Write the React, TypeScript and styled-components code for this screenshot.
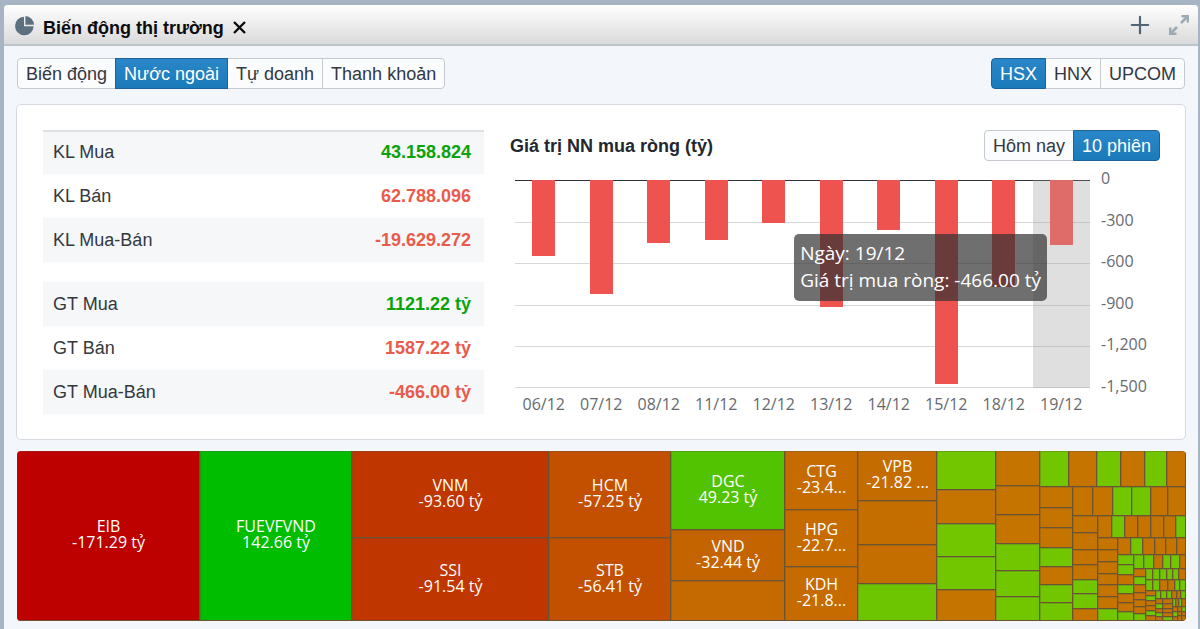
import React, { useState } from "react";
import styled, { createGlobalStyle, css } from "styled-components";

const SANS = '"Liberation Sans", Arial, Helvetica, sans-serif';
const CHART_FONT = '"Open Sans", "Noto Sans", sans-serif';

const GlobalStyle = createGlobalStyle`
  *, *::before, *::after { box-sizing: border-box; }
  body {
    margin: 0;
    background: #a7b4c3;
    color: #33383f;
    font: 18px/24px ${SANS};
  }
`;

/* ---------- Panel ---------- */

const Panel = styled.section`
  min-height: calc(100vh - 5px);
  margin: 5px 2px 0 4px;
  border-radius: 4px 4px 0 0;
  background: #f3f7fb;
  overflow: hidden;
`;

const PanelHeader = styled.header`
  display: flex;
  align-items: center;
  height: 41px;
  padding: 0 8px 0 11px;
  border-bottom: 2px solid #bac4cb;
  background: linear-gradient(#ffffff, #dadada);
`;

const PanelTitle = styled.h1`
  margin: 0 0 0 8px;
  padding-top: 6px;
  color: #0b0c0e;
  font-size: 18px;
  line-height: 24px;
`;

const IconButton = styled.button<{ $tone: string }>`
  display: flex;
  padding: 0;
  border: 0;
  background: none;
  color: ${(p) => p.$tone};
  cursor: pointer;
`;

const CloseButton = styled(IconButton)`
  margin-left: 8px;
  padding-top: 6px;
`;

const HeaderActions = styled.div`
  display: flex;
  align-items: center;
  gap: 18px;
  margin-left: auto;
`;

const PanelBody = styled.div`
  padding: 12px 12px 8px;
`;

/* ---------- Segmented buttons ---------- */

const Toolbar = styled.div`
  display: flex;
  justify-content: space-between;
  padding: 0 1px;
`;

const Segments = styled.div`
  display: flex;
`;

const Segment = styled.button<{ $active: boolean }>`
  height: 31px;
  margin-left: -1px;
  padding: 0 8px;
  border: 1px solid #c5cad1;
  background: #fafcfe;
  color: #33383f;
  font: 18px/28px ${SANS};
  white-space: nowrap;
  cursor: pointer;

  &:first-child {
    margin-left: 0;
    border-radius: 4px 0 0 4px;
  }
  &:last-child {
    border-radius: 0 4px 4px 0;
  }
  ${(p) =>
    p.$active &&
    css`
      position: relative;
      border-color: #1a6297;
      background: linear-gradient(#2a86c8, #1a7bbb);
      color: #ffffff;
    `}
`;

function SegmentedControl({ label, options, initial }: { label: string; options: string[]; initial: string }) {
  const [value, setValue] = useState(initial);
  return (
    <Segments role="group" aria-label={label}>
      {options.map((o) => (
        <Segment key={o} type="button" $active={o === value} aria-pressed={o === value} onClick={() => setValue(o)}>
          {o}
        </Segment>
      ))}
    </Segments>
  );
}

/* ---------- Summary card ---------- */

const Card = styled.div`
  display: flex;
  gap: 26px;
  margin-top: 15px;
  padding: 25px 25px 25px 26px;
  border: 1px solid #d6dae0;
  border-radius: 5px;
  background: #ffffff;
`;

const Summary = styled.div`
  flex: 441 1 0;
  display: flex;
  flex-direction: column;
  gap: 20px;
  min-width: 0;
`;

const SummaryTable = styled.table`
  width: 100%;
  border-spacing: 0;

  tr:nth-child(odd) {
    background: #f5f7f9;
  }
`;

const SummaryTr = styled.tr<{ $ruled: boolean }>`
  box-shadow: ${(p) => (p.$ruled ? "inset 0 2px 0 #dce1e3" : "none")};
`;

const RowLabel = styled.th`
  height: 44px;
  padding: 0 10px;
  font-weight: 400;
  text-align: left;
`;

const RowValue = styled.td<{ $up: boolean }>`
  height: 44px;
  padding: 0 13px;
  color: ${(p) => (p.$up ? "#0ba30b" : "#ea5b4b")};
  font-weight: 700;
  text-align: right;
`;

type SummaryRow = [label: string, value: string, up: boolean];

const VOLUME: SummaryRow[] = [
  ["KL Mua", "43.158.824", true],
  ["KL Bán", "62.788.096", false],
  ["KL Mua-Bán", "-19.629.272", false],
];

const VALUE: SummaryRow[] = [
  ["GT Mua", "1121.22 tỷ", true],
  ["GT Bán", "1587.22 tỷ", false],
  ["GT Mua-Bán", "-466.00 tỷ", false],
];

function SummaryBlock({ rows, ruled }: { rows: SummaryRow[]; ruled: boolean }) {
  return (
    <SummaryTable>
      <tbody>
        {rows.map(([label, value, up], i) => (
          <SummaryTr key={label} $ruled={ruled && i === 0}>
            <RowLabel scope="row">{label}</RowLabel>
            <RowValue $up={up}>{value}</RowValue>
          </SummaryTr>
        ))}
      </tbody>
    </SummaryTable>
  );
}

/* ---------- Net buying chart ---------- */

const ChartPane = styled.div`
  flex: 650 1 0;
  min-width: 0;
`;

const ChartHeader = styled.div`
  display: flex;
  align-items: center;
  justify-content: space-between;
`;

const ChartTitle = styled.h2`
  margin: 0;
  color: #23272f;
  font-size: 18px;
  line-height: 24px;
`;

const ChartGrid = styled.div`
  display: grid;
  grid-template-columns: 1fr 59px;
  column-gap: 11px;
  padding: 19px 0 0 5px;
  color: #666a70;
  font: 16px/20px ${CHART_FONT};
`;

const Plot = styled.div`
  position: relative;
  height: 208px;

  svg {
    display: block;
    width: 100%;
    height: 100%;
  }
`;

const YAxis = styled.div`
  display: flex;
  flex-direction: column;
  justify-content: space-between;
  margin: -12px 0 -8px;
`;

const XAxis = styled.div`
  display: flex;
  padding-top: 6px;
`;

const XTick = styled.span`
  flex: 1 1 0;
  text-align: center;
`;

const Tooltip = styled.div`
  position: absolute;
  top: 54px;
  right: 43px;
  padding: 6px 6px 7px;
  border-radius: 5px;
  background: rgba(50, 50, 50, 0.7);
  color: #ffffff;
  font: 19px/27px ${CHART_FONT};
  white-space: nowrap;
`;

const SESSIONS: [day: string, net: number][] = [
  ["06/12", -549],
  ["07/12", -819],
  ["08/12", -452],
  ["11/12", -434],
  ["12/12", -308],
  ["13/12", -914],
  ["14/12", -358],
  ["15/12", -1468],
  ["18/12", -773],
  ["19/12", -466],
];
const TICKS = [0, -300, -600, -900, -1200, -1500];
const FLOOR = -1500;

function NetChart() {
  const slot = 100 / SESSIONS.length;
  return (
    <ChartGrid>
      <Plot>
        <svg role="img" aria-label="Giá trị NN mua ròng" shapeRendering="crispEdges">
          {TICKS.map((t) => (
            <rect
              key={t}
              x="0"
              y={t === FLOOR ? "207" : `${(t / FLOOR) * 100}%`}
              width="100%"
              height={1}
              fill={t === 0 ? "#2f3237" : "#d6d8db"}
            />
          ))}
          {SESSIONS.map(([day, net], i) => (
            <rect
              key={day}
              x={`${(i + 0.3) * slot}%`}
              y="0"
              width={`${slot * 0.4}%`}
              height={`${(net / FLOOR) * 100}%`}
              fill={i === SESSIONS.length - 1 ? "#ff5b56" : "#ef5350"}
            />
          ))}
          <rect x={`${100 - slot}%`} y="0" width={`${slot}%`} height="100%" fill="rgba(150,150,150,0.3)" />
        </svg>
        <Tooltip role="tooltip">
          Ngày: 19/12
          <br />
          Giá trị mua ròng: -466.00 tỷ
        </Tooltip>
      </Plot>
      <YAxis>
        {TICKS.map((t) => (
          <span key={t}>{t.toLocaleString("en-US")}</span>
        ))}
      </YAxis>
      <XAxis>
        {SESSIONS.map(([day]) => (
          <XTick key={day}>{day}</XTick>
        ))}
      </XAxis>
    </ChartGrid>
  );
}

/* ---------- Treemap ---------- */

interface Tile {
  size: number;
  fill?: string;
  lines?: string[];
  dir?: "row" | "column";
  children?: Tile[];
}

const FILLS: Record<string, string> = { O: "#c67400", G: "#72c600" };

/** Expands "O18 G12" into plain tiles: a colour key followed by its size. */
const tiles = (spec: string): Tile[] =>
  spec.split(" ").map((s) => ({ fill: FILLS[s[0]], size: Number(s.slice(1)) }));

const tile = (size: number, fill: string, ...lines: string[]): Tile => ({ size, fill, lines });
const col = (size: number, children: Tile[]): Tile => ({ size, dir: "column", children });
const row = (size: number, children: Tile[]): Tile => ({ size, dir: "row", children });

/** A row of tiles on top; beneath it a column of tiles next to the remaining area. */
const spiral = (
  size: number,
  topSize: number,
  top: string,
  bottomSize: number,
  sideSize: number,
  side: string,
  rest: Tile
): Tile => col(size, [row(topSize, tiles(top)), row(bottomSize, [col(sideSize, tiles(side)), rest])]);

const corner: Tile = col(13, [
  row(8, tiles("G4 O3 G3 O4")),
  row(14, [
    col(5, tiles("O5 G5 O4")),
    col(4, tiles("O4 O4 O4")),
    col(4, tiles("G4 O3 O4")),
  ]),
]);

const tail: Tile = spiral(
  146, 36, "G29 O28 G24 O24 G22 O19", 134, 33, "O21 O20 O20 G19 O18 G18 G18",
  spiral(
    113, 29, "O20 O20 G19 G19 O17 O18", 105, 25, "O17 O17 O15 O15 G14 G15 O12",
    spiral(
      88, 22, "O14 G13 O13 O13 O13 O12 G10", 83, 20, "O12 O12 O12 O12 O12 O12 G12",
      spiral(
        68, 17, "O13 G12 O12 O11 O11 O9", 66, 16, "G10 G10 O10 G9 O9 O9 G9",
        spiral(
          52, 14, "G10 G10 O9 G8 G9 O6", 51, 12, "O8 G8 O7 O7 O7 O7 G7",
          col(40, [
            row(11, tiles("G7 G7 G6 G6 G6 O7")),
            row(10, tiles("G7 G7 O7 O7 G5 G6")),
            row(30, [
              col(10, tiles("O5 G5 O5 O5 G5 O5")),
              col(29, [
                row(8, tiles("G5 G5 G5 O5 O4 G5")),
                row(22, [
                  col(7, tiles("O5 G5 O4 G4 O4")),
                  col(9, tiles("O5 O5 O4 O4 G4")),
                  corner,
                ]),
              ]),
            ]),
          ])
        )
      )
    )
  )
);

const MARKET: Tile = row(1, [
  tile(183, "#bd0000", "EIB", "-171.29 tỷ"),
  tile(152, "#00bd00", "FUEVFVND", "142.66 tỷ"),
  col(197, [tile(87, "#c03600", "VNM", "-93.60 tỷ"), tile(83, "#c03600", "SSI", "-91.54 tỷ")]),
  col(122, [tile(87, "#c35000", "HCM", "-57.25 tỷ"), tile(83, "#c35000", "STB", "-56.41 tỷ")]),
  col(114, [
    tile(79, "#52c300", "DGC", "49.23 tỷ"),
    tile(51, "#c46400", "VND", "-32.44 tỷ"),
    tile(40, "#c56a00"),
  ]),
  col(73, [
    tile(59, "#c56b00", "CTG", "-23.4..."),
    tile(57, "#c56b00", "HPG", "-22.7..."),
    tile(54, "#c56b00", "KDH", "-21.8..."),
  ]),
  col(79, [
    tile(50, "#c56c00", "VPB", "-21.82 ..."),
    tile(44, "#c56e00"),
    tile(39, "#c56e00"),
    tile(37, "#6cc500"),
  ]),
  col(59, tiles("G39 O34 G33 G33 O31")),
  col(44, tiles("O35 O29 O29 G27 G26 G24")),
  tail,
]);

const TreemapFrame = styled.div`
  display: flex;
  height: 170px;
  margin: 11px 0 0 1px;
  border-radius: 4px;
  overflow: hidden;
`;

const TileGroup = styled.div<{ $size: number; $dir: "row" | "column" }>`
  flex: ${(p) => p.$size} 1 0;
  display: flex;
  flex-direction: ${(p) => p.$dir};
  min-width: 0;
  min-height: 0;
`;

const TileBox = styled.div<{ $size: number; $fill: string }>`
  flex: ${(p) => p.$size} 1 0;
  display: flex;
  flex-direction: column;
  align-items: center;
  justify-content: center;
  min-width: 0;
  min-height: 0;
  background: ${(p) => p.$fill};
  box-shadow: inset -1px -1px 0 #6a5433, inset 1px 1px 0 rgba(85, 80, 60, 0.3);
`;

const TileText = styled.div`
  padding-bottom: 4px;
  color: #ffffff;
  font: 16px/16px ${CHART_FONT};
  text-align: center;
  white-space: nowrap;
`;

function TreeNode({ node }: { node: Tile }) {
  if (node.children) {
    return (
      <TileGroup $size={node.size} $dir={node.dir ?? "row"}>
        {node.children.map((child, i) => (
          <TreeNode key={i} node={child} />
        ))}
      </TileGroup>
    );
  }
  return (
    <TileBox $size={node.size} $fill={node.fill ?? FILLS.O}>
      {node.lines && node.lines.length > 0 && (
        <TileText>
          {node.lines[0]}
          <br />
          {node.lines[1]}
        </TileText>
      )}
    </TileBox>
  );
}

/* ---------- Icons ---------- */

const PieIcon = () => (
  <svg width="20" height="32" viewBox="0 0 20 32" aria-hidden="true">
    <path d="M9 7.7A9.3 9.3 0 1 0 18.6 17.3H9z" fill="#5d7080" />
    <path d="M10.4 7A9 9 0 0 1 19 15.8H10.4z" fill="#5d7080" />
  </svg>
);

const CloseIcon = () => (
  <svg width="15" height="15" viewBox="0 0 15 15" aria-hidden="true">
    <path d="M2 2L13 13M13 2L2 13" stroke="currentColor" strokeWidth="2.4" />
  </svg>
);

const PlusIcon = () => (
  <svg width="20" height="20" viewBox="0 0 20 20" aria-hidden="true">
    <path d="M10 1.8V18.2M1.8 10H18.2" stroke="currentColor" strokeWidth="2.2" strokeLinecap="round" />
  </svg>
);

const ExpandIcon = () => (
  <svg width="22" height="22" viewBox="0 0 22 22" aria-hidden="true">
    <path d="M13 9L19 3M9 13L3 19" stroke="currentColor" strokeWidth="2.6" />
    <path d="M13.5 1H21V8.5H18.6V3.4H13.5zM1 13.5H3.4V18.6H8.5V21H1z" fill="currentColor" />
    <path d="M15 1H21V7zM1 15V21H7z" fill="currentColor" />
  </svg>
);

export default function App() {
  return (
    <>
      <GlobalStyle />
      <Panel>
        <PanelHeader>
          <PieIcon />
          <PanelTitle>Biến động thị trường</PanelTitle>
          <CloseButton type="button" aria-label="Đóng" $tone="#0b0c0e">
            <CloseIcon />
          </CloseButton>
          <HeaderActions>
            <IconButton type="button" aria-label="Thêm" $tone="#4f6475">
              <PlusIcon />
            </IconButton>
            <IconButton type="button" aria-label="Mở rộng" $tone="#9cabb3">
              <ExpandIcon />
            </IconButton>
          </HeaderActions>
        </PanelHeader>
        <PanelBody>
          <Toolbar>
            <SegmentedControl
              label="Chế độ xem"
              options={["Biến động", "Nước ngoài", "Tự doanh", "Thanh khoản"]}
              initial="Nước ngoài"
            />
            <SegmentedControl label="Sàn" options={["HSX", "HNX", "UPCOM"]} initial="HSX" />
          </Toolbar>
          <Card>
            <Summary>
              <SummaryBlock rows={VOLUME} ruled />
              <SummaryBlock rows={VALUE} ruled={false} />
            </Summary>
            <ChartPane>
              <ChartHeader>
                <ChartTitle>Giá trị NN mua ròng (tỷ)</ChartTitle>
                <SegmentedControl label="Thời gian" options={["Hôm nay", "10 phiên"]} initial="10 phiên" />
              </ChartHeader>
              <NetChart />
            </ChartPane>
          </Card>
          <TreemapFrame>
            <TreeNode node={MARKET} />
          </TreemapFrame>
        </PanelBody>
      </Panel>
    </>
  );
}
